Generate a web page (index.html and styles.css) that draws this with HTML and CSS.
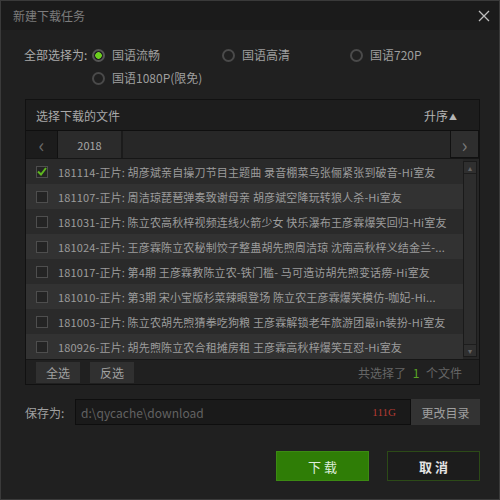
FILE: index.html
```html
<!DOCTYPE html>
<html lang="zh-CN">
<head>
  <meta charset="UTF-8">
  <title>新建下载任务</title>
  <link rel="stylesheet" href="styles.css">
</head>
<body>
  <div class="window">
    <!-- Title bar -->
    <div class="titlebar">
      <span class="title">新建下载任务</span>
      <svg class="close" width="12" height="12" viewBox="0 0 12 12">
        <path d="M1 1 L11 11 M11 1 L1 11" stroke="#bdbdbd" stroke-width="1.3" fill="none"/>
      </svg>
    </div>

    <!-- Quality options -->
    <div class="options">
      <span class="opt-label">全部选择为:</span>
      <label class="radio checked"><i></i>国语流畅</label>
      <label class="radio"><i></i>国语高清</label>
      <label class="radio"><i></i>国语720P</label>
      <span></span>
      <label class="radio"><i></i>国语1080P(限免)</label>
    </div>

    <!-- File panel -->
    <div class="panel">
      <div class="panel-head">
        <span>选择下载的文件</span>
        <span class="sort">升序<b>▲</b></span>
      </div>
      <div class="tabs">
        <span class="arrow left">&lsaquo;</span>
        <span class="tab">2018</span>
        <span class="tab-fill"></span>
        <span class="arrow right">&rsaquo;</span>
      </div>
      <div class="list-wrap">
        <ul class="list">
          <li class="on"><i class="check"><svg width="10" height="9" viewBox="0 0 10 9"><path d="M1 4.5 L4 7.5 L9 1" stroke="#5fb81f" stroke-width="2" fill="none"/></svg></i>181114-正片: 胡彦斌亲自操刀节目主题曲 录音棚菜鸟张俪紧张到破音-Hi室友</li>
          <li><i class="check"></i>181107-正片: 周洁琼琵琶弹奏致谢母亲 胡彦斌空降玩转狼人杀-Hi室友</li>
          <li><i class="check"></i>181031-正片: 陈立农高秋梓视频连线火箭少女 快乐瀑布王彦霖爆笑回归-Hi室友</li>
          <li><i class="check"></i>181024-正片: 王彦霖陈立农秘制饺子整蛊胡先煦周洁琼 沈南高秋梓义结金兰-...</li>
          <li><i class="check"></i>181017-正片: 第4期 王彦霖教陈立农-铁门槛- 马可造访胡先煦变话痨-Hi室友</li>
          <li><i class="check"></i>181010-正片: 第3期 宋小宝版杉菜辣眼登场 陈立农王彦霖爆笑模仿-咖妃-Hi...</li>
          <li><i class="check"></i>181003-正片: 陈立农胡先煦猜拳吃狗粮 王彦霖解锁老年旅游团最in装扮-Hi室友</li>
          <li><i class="check"></i>180926-正片: 胡先煦陈立农合租摊房租 王彦霖高秋梓爆笑互怼-Hi室友</li>
        </ul>
        <div class="scrollbar">
          <span class="sb-btn">&#9652;</span>
          <span class="sb-thumb"></span>
          <span class="sb-btn">&#9662;</span>
        </div>
      </div>
      <div class="panel-foot">
        <button class="small-btn">全选</button>
        <button class="small-btn">反选</button>
        <span class="count">共选择了 <em>1</em> 个文件</span>
      </div>
    </div>

    <!-- Save location -->
    <div class="save-row">
      <span class="save-label">保存为:</span>
      <div class="path">
        <span>d:\qycache\download</span>
        <span class="space">111G</span>
      </div>
      <button class="change-btn">更改目录</button>
    </div>

    <!-- Actions -->
    <div class="actions">
      <button class="btn primary">下 载</button>
      <button class="btn">取 消</button>
    </div>
  </div>
</body>
</html>
```

FILE: styles.css
```css
/* General Styles */
body {
  margin: 0;
  background: #1f1f1f;
  font-family: "Noto Sans CJK SC", "Liberation Sans", sans-serif;
  font-size: 12px;
  color: #a9a9a9;
}

.window {
  width: 500px;
  height: 500px;
  box-sizing: border-box;
  border: 1px solid #3a3a3a;
  background: #202020;
}

.titlebar {
  height: 29px;
  display: flex;
  align-items: center;
  justify-content: space-between;
  padding: 0 9px 0 12px;
  background: #1b1b1b;
}

.title {
  color: #7c7c7c;
  font-size: 12px;
}

/* Quality options */
.options {
  display: grid;
  grid-template-columns: 67px 130px 128px auto;
  row-gap: 7px;
  padding: 17px 0 0 23px;
  line-height: 16px;
}

.opt-label {
  color: #aaa;
}

.radio {
  display: flex;
  align-items: center;
  gap: 6px;
  color: #9e9e9e;
}

.radio i {
  width: 9px;
  height: 9px;
  border: 2px solid #4a4a4a;
  border-radius: 50%;
  margin-left: 1px;
  margin-right: 1px;
}

.radio.checked i {
  border-color: #555;
  background: radial-gradient(circle, #6ccf1e 0 3px, #1f1f1f 3.5px);
}

/* File panel */
.panel {
  margin: 13px 19px 0 24px;
  border: 1px solid #111;
  background: #252525;
}

.panel-head {
  height: 30px;
  display: flex;
  align-items: center;
  justify-content: space-between;
  padding: 0 22px 0 10px;
  background: #1d1d1d;
  border-bottom: 1px solid #0f0f0f;
  color: #a8a8a8;
}

.sort {
  color: #b5b5b5;
}

.sort b {
  font-size: 8px;
  margin-left: 1px;
  vertical-align: 1px;
}

.tabs {
  height: 27px;
  display: flex;
  background: #272727;
}

.arrow {
  width: 31px;
  display: flex;
  align-items: center;
  justify-content: center;
  font-size: 20px;
  color: #6a6a6a;
  background: #1c1c1c;
  border-right: 1px solid #111;
}

.arrow.right {
  width: 27px;
  background: #2e2e2e;
  border: 1px solid #111;
  border-top: 0;
  color: #777;
}

.tab {
  width: 63px;
  display: flex;
  align-items: center;
  justify-content: center;
  background: #2b2b2b;
  border-right: 2px solid #1b1b1b;
  color: #a8a8a8;
  font-size: 11px;
}

.tab-fill {
  flex: 1;
}

.list-wrap {
  display: flex;
  background: #262626;
  border-top: 1px solid #161616;
}

.list {
  flex: 1;
  margin: 0;
  padding: 0;
  list-style: none;
}

.list li {
  height: 25px;
  display: flex;
  align-items: center;
  padding-left: 10px;
  font-size: 11px;
  letter-spacing: 0.15px;
  color: #9c9c9c;
  white-space: nowrap;
  overflow: hidden;
  background: #2a2a2a;
}

.list li:nth-child(even) {
  background: #323232;
}

.check {
  flex: none;
  width: 10px;
  height: 10px;
  border: 1px solid #4e4e4e;
  background: #242424;
  margin-right: 10px;
  display: flex;
  align-items: center;
  justify-content: center;
}

.scrollbar {
  width: 12px;
  margin: 2px 2px 2px 0;
  display: flex;
  flex-direction: column;
  background: #2c2c2c;
  border: 1px solid #1a1a1a;
}

.sb-btn {
  height: 11px;
  display: flex;
  align-items: center;
  justify-content: center;
  font-size: 8px;
  color: #666;
  background: #2f2f2f;
  border-bottom: 1px solid #1d1d1d;
}

.sb-btn:last-child {
  border-bottom: 0;
  border-top: 1px solid #1d1d1d;
}

.sb-thumb {
  flex: 1;
  background: #2d2d2d;
}

.panel-foot {
  height: 24px;
  display: flex;
  align-items: center;
  gap: 10px;
  padding: 0 17px 0 10px;
  background: #202020;
  border-top: 1px solid #161616;
}

.small-btn {
  height: 21px;
  padding: 0 10px;
  border: 0;
  background: #303030;
  color: #a0a0a0;
  font-family: inherit;
  font-size: 12px;
}

.count {
  margin-left: auto;
  color: #666;
}

.count em {
  font-style: normal;
  color: #5aa624;
  margin: 0 4px;
}

/* Save location */
.save-row {
  display: flex;
  align-items: center;
  margin: 14px 19px 0 24px;
  height: 26px;
}

.save-label {
  width: 50px;
  color: #a0a0a0;
}

.path {
  flex: 1;
  height: 100%;
  box-sizing: border-box;
  display: flex;
  align-items: center;
  justify-content: space-between;
  padding: 0 14px 0 5px;
  background: #1a1a1a;
  border: 1px solid #0e0e0e;
  color: #626262;
  font-size: 12px;
}

.space {
  color: #b53a33;
  font-family: "Liberation Serif", serif;
  font-size: 11px;
}

.change-btn {
  width: 69px;
  height: 100%;
  border: 0;
  background: #333;
  color: #a0a0a0;
  font-family: inherit;
  font-size: 12px;
}

/* Actions */
.actions {
  display: flex;
  justify-content: flex-end;
  gap: 18px;
  margin: 26px 19px 0 0;
}

.btn {
  width: 93px;
  height: 30px;
  background: #1c1c1c;
  border: 1px solid #2c4a17;
  color: #e4e4e4;
  font-family: inherit;
  font-size: 13px;
  font-weight: bold;
}

.btn.primary {
  background: #2f7d06;
  border-color: #3c8a12;
  color: #dfeedd;
  font-weight: normal;
}
```
